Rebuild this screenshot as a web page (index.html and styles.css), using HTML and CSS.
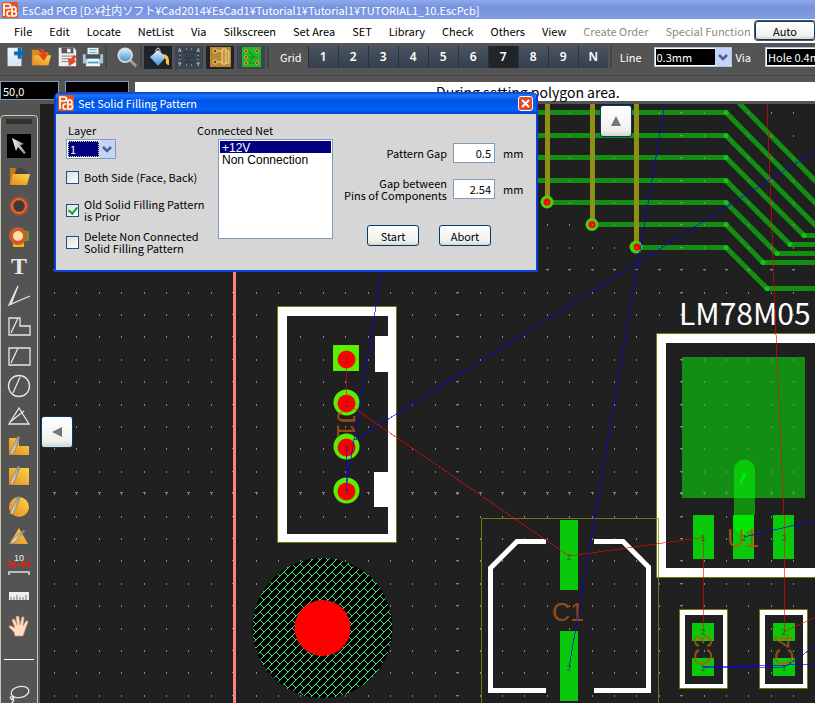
FILE: index.html
```html
<!DOCTYPE html>
<html lang="en">
<head>
<meta charset="utf-8">
<title>EsCad PCB</title>
<link rel="stylesheet" href="styles.css">
</head>
<body>
<svg class="defs" aria-hidden="true">
  <defs>
    <linearGradient id="gold" x1="0" y1="1" x2="1" y2="0"><stop offset="0" stop-color="#e08a1c"/><stop offset="1" stop-color="#ffd648"/></linearGradient>
    <linearGradient id="silver" x1="0" y1="0" x2="1" y2="0"><stop offset="0" stop-color="#f4f4f4"/><stop offset="1" stop-color="#8c8c8c"/></linearGradient>
    <linearGradient id="sky" x1="0" y1="0" x2="0" y2="1"><stop offset="0" stop-color="#e2f3ff"/><stop offset="1" stop-color="#3c8fd0"/></linearGradient>
    <symbol id="logo" viewBox="0 0 16 16">
      <rect width="16" height="16" rx="1" fill="#e6541c"/>
      <path d="M2 14V2h4.500q2 0 2 2t-2 2H2M10 5v9h2.500q2 0 2-2.200t-2-2.300H10M12.500 9.500q1.500-.2 1.500-2T12.500 5H10M8.500 9H7q-2 0-2 2.500T7 14h1.500" fill="none" stroke="#fff" stroke-width="1.700"/>
    </symbol>
    <symbol id="chevron" viewBox="0 0 16 18">
      <rect width="16" height="18" rx="2" fill="#c3d3fb"/>
      <path d="M4 7l4 4 4-4" fill="none" stroke="#4d6185" stroke-width="2.500"/>
    </symbol>
    <symbol id="pen" viewBox="0 0 24 24">
      <path d="M3 20L6 13 11 2 13 3 9 14 5 20z" fill="url(#silver)" stroke="#777" stroke-width=".6"/>
    </symbol>
  </defs>
</svg>

<header class="titlebar">
  <svg class="logo"><use href="#logo"/></svg>
  <h1>EsCad PCB [D:¥社内ソフト¥Cad2014¥EsCad1¥Tutorial1¥Tutorial1¥TUTORIAL1_10.EscPcb]</h1>
</header>

<div class="menurow">
  <nav class="menubar">
    <button>File</button><button>Edit</button><button>Locate</button><button>NetList</button><button>Via</button><button>Silkscreen</button><button>Set Area</button><button>SET</button><button>Library</button><button>Check</button><button>Others</button><button>View</button><button disabled>Create Order</button><button disabled>Special Function</button>
  </nav>
  <button class="xp-button auto">Auto</button>
</div>

<div class="toolbar">
  <div class="files">
    <button aria-label="New"><svg viewBox="0 0 24 24"><path d="M4 2h15v20H4z" fill="url(#sky)"/><path d="M4 2h15v20H4z" fill="#f3f5f7" opacity=".85"/><path d="M15 2h4v4h4v4h-4v4h-4v-4h-4V6h4z" fill="#0b6cb4"/></svg></button>
    <button aria-label="Open"><svg viewBox="0 0 24 24"><path d="M2 4h7l2 3h9v14H2z" fill="#d98a18"/><path d="M4 10h19l-3 11H2z" fill="url(#gold)"/><path d="M9 3q8-1 8 6h3l-5 7-6-7h4q0-4-4-6z" fill="#e8431c"/></svg></button>
    <button aria-label="Save"><svg viewBox="0 0 24 24"><path d="M3 2h17l2 3v17H3z" fill="#efefef"/><path d="M6 2h13v6H6z" fill="#575757"/><path d="M12 3h4v4h-4z" fill="#eee"/><path d="M6 11h14M6 14h8M6 17h7" stroke="#777"/><path d="M23 11l-3 4 2 2-8 5-1-9 3 1 3-4z" fill="#e54827"/></svg></button>
    <button aria-label="Print"><svg viewBox="0 0 24 24"><path d="M6 2h12v8H6z" fill="#edf3f7"/><path d="M8 4h8M8 7h8" stroke="#4a9ed0"/><path d="M1 9h22v10H1z" fill="#aac6d9"/><path d="M4 9h16v5H4z" fill="#45525c"/><path d="M6 14h12l2 8H4z" fill="#f5f8fa"/><path d="M6 18h12" stroke="#4a9ed0" stroke-width="2"/></svg></button>
  </div>
  <i class="sep"></i>
  <button aria-label="Zoom"><svg viewBox="0 0 24 24"><path d="M15 15l7 7" stroke="#a99b91" stroke-width="3"/><circle cx="10" cy="10" r="7.500" fill="url(#sky)" stroke="#d1dce3" stroke-width="2"/></svg></button>
  <i class="sep"></i>
  <div class="modes">
    <button class="on" aria-label="Fill"><svg viewBox="0 0 28 22"><path d="M6 11l8-7 8 7-8 9z" fill="url(#sky)"/><path d="M12 9V4q2-4 4 0v4" fill="none" stroke="#ddd"/><path d="M19 8q7 0 6 11-4 0-3-5z" fill="#ffc632"/></svg></button>
    <button aria-label="Empty area"><svg viewBox="0 0 28 22"><path d="M6 5l-2-3M6 5H3M22 5l2-3M22 5h3M6 17l-2 3M6 17H3M22 17l2 3M22 17h3M11 3h1M16 3h1M11 19h1M16 19h1M5 9v1M5 13v1M23 9v1M23 13v1" stroke="#c6d0d8"/><path d="M9 6h10v2M9 6v2M12 8l-2 3M16 8v2h3M10 12h8M14 12v4M9 16h10" fill="none" stroke="#28313b"/></svg></button>
    <button class="on" aria-label="Single board"><svg viewBox="0 0 28 22"><path d="M4 1h21v20H4z" fill="#bb8730"/><g fill="#754713" stroke="#f3d690"><circle cx="9" cy="5" r="2"/><circle cx="9" cy="16" r="2"/></g><path d="M11 5h5M11 16h5M16 3h4v15h-4zM20 5h3v12h-3" fill="#c99540" stroke="#f3d690"/></svg></button>
    <button aria-label="Double board"><svg viewBox="0 0 28 22"><path d="M5 1h19v20H5z" fill="#24b826"/><path d="M12 5l5 6-5 5M12 11h8M12 17h7" fill="none" stroke="#0a8a18"/><g fill="#782b16" stroke="#e5a247"><circle cx="9" cy="5" r="1.500"/><circle cx="20" cy="5" r="1.500"/><circle cx="9" cy="11" r="1.500"/><circle cx="9" cy="17" r="1.500"/><circle cx="20" cy="17" r="1.500"/></g></svg></button>
  </div>
  <i class="sep"></i>
  <span class="grid-label">Grid</span>
  <div class="gridset"><button>1</button><button>2</button><button>3</button><button>4</button><button>5</button><button>6</button><button class="on">7</button><button>8</button><button>9</button><button>N</button></div>
  <i class="sep"></i>
  <label for="line">Line</label>
  <span class="combo dark"><select id="line"><option>0.3mm</option></select><svg><use href="#chevron"/></svg></span>
  <label for="via">Via</label>
  <span class="combo dark via"><select id="via"><option>Hole 0.4mm</option></select></span>
</div>

<div class="statusbar">
  <input value="50,0" aria-label="Position"><input value="" class="wide" aria-label="Distance">
  <output>During setting polygon area.</output>
</div>

<main>
  <aside>
    <div class="toolbox">
      <i class="grip"></i>
      <button class="on" aria-label="Select"><svg viewBox="0 0 24 24"><path d="M5 4l12 6-4 1 6 8-2 1-6-7-2 4z" fill="url(#silver)"/></svg></button>
      <button aria-label="Library"><svg viewBox="0 0 24 24"><path d="M3 4h5l2 2v15H3z" fill="#c87819"/><path d="M8 8l3-4 3-1 3 3 4 3v4H8z" fill="#444"/><path d="M6 10h17l-3 11H3z" fill="url(#gold)"/></svg></button>
      <button aria-label="Pad"><svg viewBox="0 0 24 24"><circle cx="12" cy="12" r="7.500" fill="#3b3b3b" stroke="#bc4a20" stroke-width="4"/><circle cx="12" cy="12" r="7" fill="none" stroke="#e28a5c"/></svg></button>
      <button aria-label="Land"><svg viewBox="0 0 24 24"><path d="M14 7h8v10h-8z" fill="#5c9d22"/><path d="M6 16h11v7H6z" fill="#f3b708"/><circle cx="11" cy="12" r="7" fill="#ffdcab" stroke="#cc5b2c" stroke-width="4"/></svg></button>
      <button aria-label="Text" class="letter">T</button>
      <button aria-label="Line"><svg viewBox="0 0 24 24" class="outline"><path d="M11 2L2 21l21-9M11 2L4 20"/></svg></button>
      <button aria-label="Polygon"><svg viewBox="0 0 24 24" class="outline"><path d="M2 4h11v8h10v9H2z"/><path d="M11 4L4 19"/></svg></button>
      <button aria-label="Rectangle"><svg viewBox="0 0 24 24" class="outline"><path d="M2 4h21v17H2z"/><path d="M11 4L4 19"/></svg></button>
      <button aria-label="Circle"><svg viewBox="0 0 24 24" class="outline"><circle cx="12" cy="12" r="10.500"/><path d="M13 3L6 19"/></svg></button>
      <button aria-label="Triangle"><svg viewBox="0 0 24 24" class="outline"><path d="M12 4l10 16H2z"/><path d="M3 18L17 7"/></svg></button>
      <button aria-label="Filled polygon"><svg viewBox="0 0 24 24"><path d="M2 4h10v8h10v9H2z" fill="url(#gold)"/><use href="#pen"/></svg></button>
      <button aria-label="Filled rectangle"><svg viewBox="0 0 24 24"><path d="M2 4h20v17H2z" fill="url(#gold)"/><use href="#pen"/></svg></button>
      <button aria-label="Filled circle"><svg viewBox="0 0 24 24"><circle cx="12" cy="13" r="10" fill="url(#gold)"/><use href="#pen"/></svg></button>
      <button aria-label="Filled triangle"><svg viewBox="0 0 24 24"><path d="M12 4l9 16H2z" fill="url(#gold)"/><path d="M3 20l4-6L17 6l1 1-9 10z" fill="url(#silver)" stroke="#777" stroke-width=".5"/></svg></button>
      <button aria-label="Dimension"><svg viewBox="0 0 24 24"><text x="12" y="7" text-anchor="middle" class="tick">10</text><path d="M2 4v10M22 4v10M3 10.500h18" fill="none" stroke="#d3281a" stroke-width="1.500"/><path d="M3 10.500l6-4v8zM21 10.500l-6-4v8z" fill="#d3281a"/><path d="M2 21v-3h20v3" fill="none" stroke="#ddd" stroke-width="1.500"/></svg></button>
      <button aria-label="Ruler"><svg viewBox="0 0 24 24"><path d="M2 8h20v8H2z" fill="#eee"/><path d="M4 16v-3M7 16v-3M10 16v-5M13 16v-3M16 16v-3M19 16v-5" stroke="#777"/></svg></button>
      <button aria-label="Pan"><svg viewBox="0 0 24 24"><path d="M8 22l-1-4-5-5q0-2 2-1l4 2L5 6q1-2 3 0l2 5-1-8q2-2 3 0l1 8 2-8q2-1 2 1l-1 8 3-5q2-1 2 1l-3 8-2 6z" fill="#ffdcc2" stroke="#d09573" stroke-width=".7"/></svg></button>
      <i class="rule"></i>
      <button aria-label="Lasso"><svg viewBox="0 0 24 24" class="outline"><ellipse cx="13" cy="9" rx="9" ry="5.500" transform="rotate(-12 13 9)"/><path d="M6 13q-4 1-2 3t2-3q2 5-2 8"/></svg></button>
    </div>
  </aside>

  <section class="board">
    <svg class="pcb" role="img" aria-label="Board layout">
      <defs>
        <pattern id="dots" patternUnits="userSpaceOnUse" x="547" y="112" width="112" height="112">
          <path d="M0 1H112M0 24H112M0 46H112M0 69H112M0 91H112" stroke="#858585" stroke-width="2" stroke-dasharray="1 21 1 22 1 21 1 21 1 22"/>
        </pattern>
        <pattern id="cross-col" patternUnits="userSpaceOnUse" x="680" y="112" width="224" height="112">
          <path d="M0 .5h3M0 23.500h3M0 45.500h3M0 68.500h3M0 90.500h3" stroke="#858585"/>
        </pattern>
        <pattern id="cross-row" patternUnits="userSpaceOnUse" x="546" y="269" width="112" height="223">
          <path d="M0 .5h3M22 .5h3M45 .5h3M67 .5h3M89 .5h3" stroke="#858585"/>
        </pattern>
        <pattern id="brick" patternUnits="userSpaceOnUse" width="8" height="8">
          <path d="M7 0h1v1H7zM6 1h1v1H6zM5 2h1v1H5zM4 3h1v1H4zM3 4h2v1H3zM2 5h1v1H2zM5 5h1v1H5zM1 6h1v1H1zM6 6h1v1H6zM0 7h1v1H0zM7 7h1v1H7z" fill="#3fe07a"/>
        </pattern>
      </defs>
      <g transform="translate(-40 -104)">
        <g class="trace" stroke="#128f12">
          <path d="M739 103L830 196M500 112.500H726L830 218M500 135.500H726L830 240M500 157.500H726L804 235.500H2000M500 180.500H726L790 244.500H2000M547 202.500H726L777 253.500H2000M592 224.500H726L763 262.500H2000M636 247.500H726L767 288.500H2000"/>
        </g>
        <path class="trace" stroke="#8f8f14" d="M547.500 104V202M592.500 104V224M636.500 104V247"/>
        <g fill="#0cc80c"><circle cx="726" cy="112.500" r="2.500"/><circle cx="726" cy="135.500" r="2.500"/><circle cx="726" cy="157.500" r="2.500"/><circle cx="726" cy="180.500" r="2.500"/><circle cx="726" cy="202.500" r="2.500"/><circle cx="726" cy="224.500" r="2.500"/><circle cx="726" cy="247.500" r="2.500"/><circle cx="804" cy="235.500" r="2.500"/><circle cx="790" cy="244.500" r="2.500"/><circle cx="777" cy="253.500" r="2.500"/><circle cx="763" cy="262.500" r="2.500"/><circle cx="767" cy="288.500" r="2.500"/></g>
        <g fill="#4ad010"><circle cx="547" cy="202" r="6.500"/><circle cx="592" cy="224.500" r="6.500"/><circle cx="636" cy="247" r="6.500"/></g>
        <g fill="#f00"><circle cx="547" cy="202" r="3.500"/><circle cx="592" cy="224.500" r="3.500"/><circle cx="637" cy="247" r="3.500"/></g>

        <path d="M682 357H805V498H682z" fill="#128f12"/>
        <g class="grid-dots"><rect x="40" y="104" width="100%" height="100%" fill="url(#dots)"/><rect x="40" y="104" width="100%" height="100%" fill="url(#cross-col)"/><rect x="40" y="104" width="100%" height="100%" fill="url(#cross-row)"/></g>
        <path d="M234.500 104V2000" stroke="#ff8080" stroke-width="3"/>

        <g class="part">
          <path class="silk" fill-rule="evenodd" d="M278 307H396V542H278zM287 316V534H388V507H374V472H388V372H375V336H388V316z"/>
          <path class="bound" d="M277.500 306.500H396.500V542.500H277.500z"/>
        </g>
        <g fill="#58f000"><path d="M333 345H359V371H333z"/><circle cx="346.500" cy="402.500" r="13"/><circle cx="346.500" cy="446.500" r="13"/><circle cx="346.500" cy="490.500" r="13"/></g>
        <g fill="#f00"><circle cx="346.500" cy="359.500" r="9"/><circle cx="346.500" cy="403.500" r="9"/><circle cx="346.500" cy="447.500" r="9"/><circle cx="346.500" cy="491.500" r="9"/></g>
        <text class="ref" transform="translate(337 411) rotate(90)">J1</text>

        <circle cx="322.500" cy="628" r="70" fill="#000"/><circle cx="322.500" cy="628" r="70" fill="url(#brick)" shape-rendering="crispEdges"/><circle cx="322.500" cy="628" r="28" fill="#f00"/>

        <text class="value" x="679" y="325">LM78M05</text>
        <path class="silk" fill-rule="evenodd" d="M657 334H2000V577H657zM666 343V568H1991V343z"/>
        <path class="bound" d="M656.500 333.500H2000M656.500 333.500V577.500H2000"/>
        <path d="M734 490V515H755V490z" fill="#128f12"/>
        <path d="M734 498V470A10.500 10.500 0 0 1 755 470V498z" fill="#0ac80a"/>
        <path d="M739 484l4-10q3-3 3 1l-5 9z" fill="#00ef00"/>
        <path class="pad" d="M693 515H714V559H693zM733 515H754V559H733zM773 515H794V559H773z"/>
        <path d="M734 515H754V524A10 10 0 0 1 734 524z" fill="#00e800"/>

        <path class="bound" d="M481.500 703V518.500H658.500V703"/>
        <path d="M546 541.500H517L490.500 568V690.500H546M594 541.500H623L648.500 567V690.500H594" fill="none" stroke="#fff" stroke-width="5"/>
        <path class="pad" d="M560 520H578V590H560zM560 631H578V701H560z"/>
        <path class="silk" fill-rule="evenodd" d="M680 610H727V688H680zM685 615V684H723V615zM760 610H807V688H760zM765 615V684H803V615z"/>
        <path class="bound" d="M679.500 609.500H727.500V688.500H679.500zM759.500 609.500H807.500V688.500H759.500z"/>
        <path class="pad" d="M692 623H714V641H692zM692 658H714V676H692zM773 623H795V641H773zM773 658H795V676H773z"/>
        <g class="ref"><text x="727" y="547">U1</text><text x="552" y="621">C1</text><text transform="translate(712 666) rotate(-90)">C3</text><text transform="translate(793 666) rotate(-90)">C4</text></g>
        <g class="pin"><text x="346" y="363">1</text><text x="346" y="407">2</text><text x="346" y="451">3</text><text x="346" y="495">4</text><text x="703" y="541">1</text><text x="744" y="541">2</text><text x="784" y="541">3</text><text x="569" y="560">1</text><text x="569" y="671">2</text><text x="703" y="635">2</text><text x="703" y="671">1</text><text x="784" y="635">2</text><text x="784" y="671">1</text></g>
        <g class="net blue"><path d="M665 104L569 668M830 142L355 440M382 270L347 482M346.500 447V491M744 537L830 517M703 667.500H784L830 636M703 667L830 664"/></g>
        <g class="net red"><path d="M346.500 360V403L569 556 703 537.500V631M767 104L776 335 784 514V632L830 610"/></g>
      </g>
    </svg>
    <button class="xp-button nudge up" aria-label="Scroll up"><svg viewBox="0 0 12 12"><path d="M6 1l5 10H1z" fill="#777"/></svg></button>
    <button class="xp-button nudge left" aria-label="Scroll left"><svg viewBox="0 0 12 12"><path d="M1 6l10-5v10z" fill="#777"/></svg></button>
  </section>
</main>

<form class="dialog" role="dialog" aria-labelledby="dlg-title">
  <header><svg class="logo"><use href="#logo"/></svg><h2 id="dlg-title">Set Solid Filling Pattern</h2><button type="button" class="close" aria-label="Close"><svg viewBox="0 0 13 13"><path d="M3 3l7 7M10 3l-7 7" stroke="#fff" stroke-width="2"/></svg></button></header>
  <div class="content">
    <div class="options">
      <label for="layer">Layer</label>
      <span class="combo"><select id="layer"><option>1</option></select><svg><use href="#chevron"/></svg></span>
      <label class="check"><input type="checkbox"><span>Both Side (Face, Back)</span></label>
      <label class="check"><input type="checkbox" checked><span>Old Solid Filling Pattern<br>is Prior</span></label>
      <label class="check"><input type="checkbox"><span>Delete Non Connected<br>Solid Filling Pattern</span></label>
    </div>
    <div class="nets">
      <label for="net">Connected Net</label>
      <select id="net" size="8"><option selected>+12V</option><option>Non Connection</option></select>
    </div>
    <div class="gaps">
      <div class="gap-row"><label for="gap">Pattern Gap</label><input id="gap" value="0.5"><span>mm</span></div>
      <div class="gap-row"><label for="pins">Gap between<br>Pins of Components</label><input id="pins" value="2.54"><span>mm</span></div>
      <div class="actions"><button type="button" class="xp-button">Start</button><button type="button" class="xp-button">Abort</button></div>
    </div>
  </div>
</form>
</body>
</html>
```
FILE: styles.css
```css
* { box-sizing: border-box; }
body {
  margin: 0;
  height: 100vh;
  display: flex;
  flex-direction: column;
  position: relative;
  overflow: hidden;
  background: #545454;
  font: 11px/12px "Noto Sans CJK JP", sans-serif;
  color: #000;
}
button, input, select { font: inherit; color: inherit; margin: 0; padding: 0; border: 0; background: none; border-radius: 0; }
h1, h2 { margin: 0; font: inherit; white-space: nowrap; }
svg { display: block; }
.defs { position: absolute; width: 0; height: 0; }
.logo { width: 16px; height: 16px; flex: none; }

.titlebar {
  display: flex;
  align-items: center;
  gap: 4px;
  height: 19px;
  flex: none;
  padding: 0 2px;
  color: #fff;
  background: linear-gradient(#8fa9ec, #7792dd 40%, #7f9ee8);
}
.menurow { display: flex; flex: none; height: 24px; background: #fff; }
.menubar {
  display: flex;
  flex: 1;
  min-width: 0;
  align-items: center;
  gap: 17px;
  padding-left: 14px;
  white-space: nowrap;
  overflow: hidden;
}
.menubar button { flex: none; }
.menubar button:disabled { color: #8a8a8a; }

.xp-button {
  border: 1px solid #003c74;
  border-radius: 3px;
  background: linear-gradient(#fff, #f0f0ec 80%, #d8d4ca);
}
.auto { flex: none; width: 60px; height: 19px; margin-top: 2px; box-shadow: 0 0 0 1px #545454; }

.toolbar {
  display: flex;
  align-items: center;
  flex: none;
  height: 33px;
  padding: 0 0 4px 4px;
  color: #fff;
  border-bottom: 1px solid #444;
  overflow: hidden;
}
.toolbar > * { flex: none; }
.toolbar button svg { width: 22px; height: 22px; }
.files { display: flex; gap: 4px; margin-right: 1px; }
.sep { width: 2px; height: 22px; margin: 0 2px; background: #444; }
.files + .sep { margin: 0 9px 0 0; }
.modes { display: flex; gap: 3px; }
.modes button { background: #3c4653; width: 28px; height: 23px; }
.toolbar .modes svg { width: 28px; height: 22px; }
.modes .on { background: #1f242c; }
.grid-label { margin: 0 6px 0 9px; }
.gridset { display: flex; }
.gridset button {
  width: 30px;
  height: 22px;
  background: linear-gradient(#4a5462, #363f4b);
  border-left: 1px solid #2b323b;
  font: 600 12px/22px "Noto Sans", sans-serif;
}
.gridset .on { background: #20242b; }
.toolbar label { margin: 0 4px; }
.toolbar label:first-of-type { margin: 0 12px 0 6px; }

.combo { display: grid; width: 50px; height: 20px; border: 1px solid #7f9db9; background: #fff; }
.combo select { grid-area: 1 / 1; appearance: none; margin: 1px 16px 1px 1px; padding-left: 1px; background: #000080; color: #fff; border: 1px dotted #dddd60; }
.combo svg { grid-area: 1 / 1; justify-self: end; width: 16px; height: 18px; pointer-events: none; }
.combo.dark { width: 78px; border: 1px solid #adc5df; }
.combo.dark select { background: #000; border: 0; }
.combo.via { width: 92px; margin-left: 10px; }
.combo.via select { margin-right: 1px; }

.statusbar { display: flex; gap: 6px; flex: none; height: 28px; padding-top: 5px; }
.statusbar input { width: 59px; height: 19px; background: #000; color: #fff; border: 1px solid #7f9db9; padding-left: 2px; }
.statusbar .wide { width: 64px; }
.statusbar output { flex: 1; height: 19px; margin-top: 1px; background: #fff; padding-left: 301px; font-size: 14px; line-height: 20px; white-space: nowrap; }

main { flex: 1; display: flex; min-height: 0; }
aside { width: 40px; flex: none; padding-top: 11px; overflow: hidden; }
.toolbox { display: flex; flex-direction: column; align-items: center; width: 38px; border: 1px solid #c9c9ae; border-radius: 4px; padding: 3px 2px; }
.toolbox > * { flex: none; }
.grip { width: 26px; height: 5px; background: #303030; margin-bottom: 7px; }
.toolbox button { height: 30px; width: 24px; }
.toolbox button svg { width: 24px; height: 24px; }
.toolbox .on svg { background: #000; }
.outline { fill: none; stroke: #e6e6e6; stroke-width: 1.300; }
.toolbox .letter { font: bold 24px/30px "Liberation Serif", serif; color: #e8e8e8; }
.tick { font: 9px "Liberation Sans", sans-serif; fill: #eee; }
.rule { width: 30px; height: 1px; background: #fff; margin: 18px 0 20px; }

.board { flex: 1; position: relative; min-width: 0; background: #202020; overflow: hidden; }
.pcb { width: 100%; height: 100%; }
.grid-dots { shape-rendering: crispEdges; }
.trace { fill: none; stroke-width: 5; stroke-linejoin: round; }
.silk { fill: #fff; }
.pad { fill: #0ac80a; }
.bound { fill: none; stroke: #8a8a10; stroke-opacity: .8; }
.ref { font: 25px "Liberation Sans", sans-serif; fill: #b85a10; fill-opacity: .8; }
.value { font: 30px "Noto Sans CJK JP", sans-serif; fill: #fff; }
.pin { font: 9px "Liberation Sans", sans-serif; fill: #333; fill-opacity: .7; text-anchor: middle; }
.net { fill: none; shape-rendering: crispEdges; }
.blue { stroke: #00f; stroke-opacity: .65; }
.red { stroke: #f00; stroke-opacity: .6; }
.nudge { position: absolute; width: 32px; height: 32px; display: grid; place-items: center; }
.nudge svg { width: 12px; height: 12px; }
.nudge.up { left: 560px; top: 1px; }
.nudge.left { left: 1px; top: 312px; }

.dialog { position: absolute; left: 54px; top: 92px; width: 484px; height: 180px; border: 2px solid #0a3fd8; border-top: 0; border-radius: 6px 6px 0 0; background: #d6d6d6; overflow: hidden; }
.dialog header { display: flex; align-items: center; gap: 4px; height: 22px; padding: 0 3px 0 2px; color: #fff; background: linear-gradient(#0a3fc0, #1a73ff 15%, #0054e3 40%, #0062fa 80%, #0040c8); }
.close { margin-left: auto; width: 15px; height: 15px; border: 1px solid #fff; border-radius: 3px; background: #e0482a; }
.close svg { width: 13px; height: 13px; }
.content { display: grid; grid-template-columns: 131px 136px 1fr; padding: 10px 10px 0; white-space: nowrap; }
.content > .options > label:first-child, .nets > label { display: block; padding-left: 2px; margin-bottom: 3px; }
.nets > label { padding-left: 0; }
.check { display: flex; align-items: center; gap: 5px; height: 24px; margin-top: 8px; }
.check:nth-of-type(2) { margin: 6px 0 9px; }
.check input { appearance: none; flex: none; width: 13px; height: 13px; border: 1px solid #1c5180; background: linear-gradient(135deg, #ddddd8, #fff); }
.check input:checked::after { content: ""; display: block; width: 4px; height: 7px; margin: 0 0 0 3px; border: solid #21a121; border-width: 0 2px 2px 0; transform: rotate(40deg); }
.nets select { display: block; width: 115px; height: 100px; margin-left: 21px; padding: 1px; border: 1px solid #7f9db9; background: #fff; overflow: hidden; font: 12px "Liberation Sans", sans-serif; }
.nets option { padding: 0 2px; height: 12px; min-height: 0; line-height: 12px; overflow: hidden; }
.nets option:checked { color: #fff; background: #000080 linear-gradient(#000080, #000080); }
.gaps { padding-top: 17px; }
.gap-row { display: grid; grid-template-columns: 114px 42px auto; column-gap: 6px; align-items: center; height: 24px; margin-bottom: 12px; text-align: right; }
.gap-row input { height: 20px; border: 1px solid #7f9db9; background: #fff; text-align: right; padding-right: 3px; width: 100%; }
.gap-row span { text-align: left; padding-left: 2px; }
.actions { display: flex; gap: 20px; padding: 12px 0 0 34px; }
.actions button { width: 52px; height: 21px; }
```
